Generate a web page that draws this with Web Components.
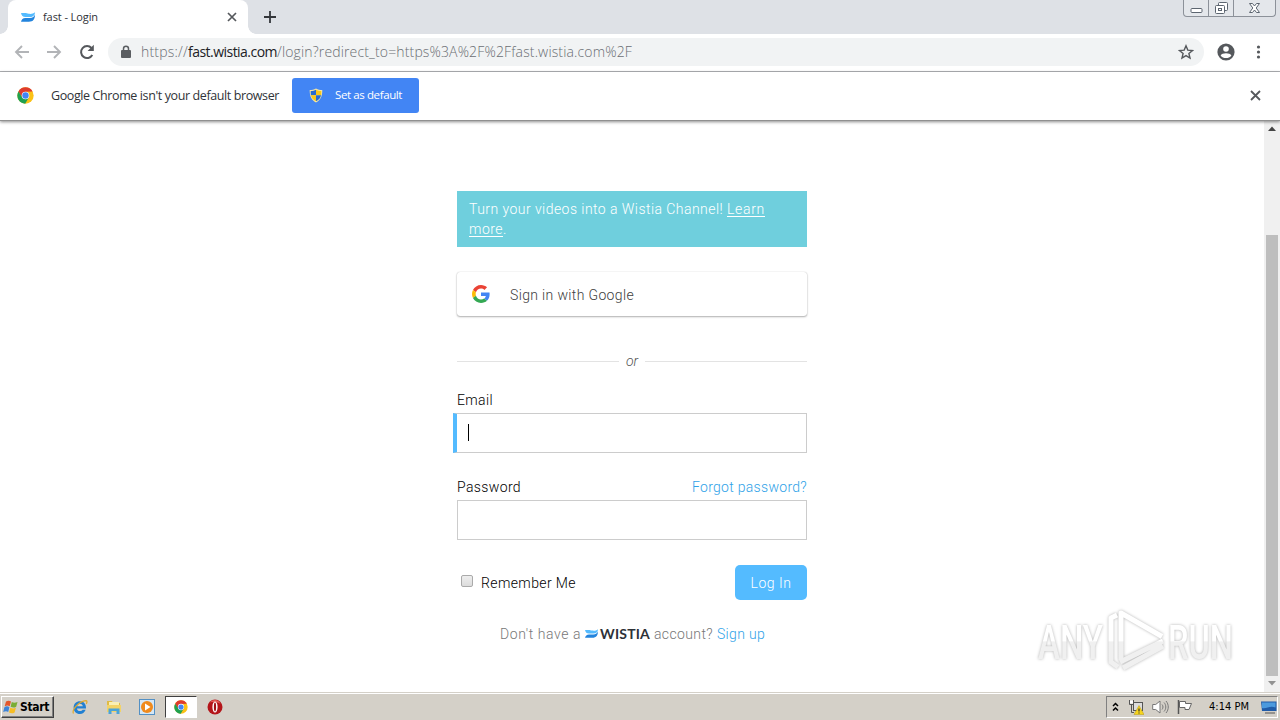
<!DOCTYPE html>
<html lang="en">
<head>
<meta charset="utf-8">
<title>fast - Login</title>
<style>
body {
    margin: 0;
    width: 1280px;
    height: 720px;
    overflow: hidden;
    background: white;
    font-family: "Open Sans", "Noto Sans", sans-serif;
}
</style>
</head>
<body>
<desktop-screen></desktop-screen>

<script>
const box = `:host, * { box-sizing: border-box; } :host { flex: none; } svg { display: block; flex: none; }`;

const chromeLogo = (size) => `
<svg width="${size}" height="${size}" viewBox="0 0 48 48">
    <circle cx="24" cy="24" r="23" fill="#fbc116"/>
    <path d="M4 12.500A23 23 0 0 1 44 12.500L24 13.500 14 30z" fill="#de3b2e"/>
    <path d="M4 12.500A23 23 0 0 0 23 47L33.500 29.500 24 34.500 14.900 29.300z" fill="#1fa150"/>
    <circle cx="24" cy="24" r="10.800" fill="white"/>
    <circle cx="24" cy="24" r="9" fill="#4285f4"/>
</svg>`;

const wistiaMark = (w, h) => `
<svg width="${w}" height="${h}" viewBox="0 0 26 20" preserveAspectRatio="none">
    <path d="M26 4.500C26 14 23 19.500 14.500 19.500H0C1 15 3.500 12 8 12h8.500c5 0 8.500-3 9.500-7.500z" fill="#2384dd"/>
    <path d="M0 2h7c3 0 4.500.8 7.500 1.500C18.500 4.300 22.500 3.500 26 .5c0 6-4 9.500-9 9.500H8C3.500 10 1 7 0 2z" fill="#54bbff"/>
</svg>`;

// Spreads its letters so that the line takes the given width.
class FitText extends HTMLElement {
    constructor() {
        super();
        this.attachShadow({mode: "open"});
    }

    connectedCallback() {
        this.shadowRoot.innerHTML = `<style>:host { display: inline-block; } span { white-space: pre; }</style><span><slot></slot></span>`;
        const natural = this.shadowRoot.querySelector("span").getBoundingClientRect().width;
        const width = Number(this.getAttribute("width"));
        if (width && natural) {
            this.style.letterSpacing = `${(width - natural) / this.textContent.length}px`;
        }
    }
}
customElements.define("fit-text", FitText);

class TabStrip extends HTMLElement {
    constructor() {
        super();
        this.attachShadow({mode: "open"});
    }

    connectedCallback() {
        this.shadowRoot.innerHTML = `
        <style>
        ${box}
        :host { display: flex; height: 34px; background: #dee1e6; padding-left: 8px; }
        .tab {
            position: relative;
            display: flex;
            align-items: center;
            width: 240px;
            padding: 0 10px 1px 13px;
            background: white;
            border-radius: 8px 8px 0 0;
            font-size: 11px;
            color: #303338;
        }
        .tab::before, .tab::after {
            content: "";
            position: absolute;
            bottom: 0;
            width: 8px;
            height: 8px;
        }
        .tab::before { left: -8px; background: radial-gradient(circle at 0 0, transparent 7.5px, white 8px); }
        .tab::after { right: -8px; background: radial-gradient(circle at 100% 0, transparent 7.5px, white 8px); }
        .title { flex: 1; margin-left: 8px; }
        .new { margin: 10px 0 0 15px; }
        .caption {
            display: flex;
            width: 93px;
            height: 17px;
            margin: 0 4px 0 auto;
            border: 1px solid #8c9199;
            border-top: 0;
            border-radius: 0 0 4px 4px;
            background: #e4e7eb;
        }
        .caption div { display: flex; justify-content: center; align-items: center; }
        .caption div + div { border-left: 1px solid #8c9199; }
        </style>
        <div class="tab">
            ${wistiaMark(14, 10)}
            <span class="title"><fit-text width="55">fast - Login</fit-text></span>
            <svg width="12" height="12" viewBox="0 0 12 12"><path d="M2 2l8 8M10 2l-8 8" stroke="#55585c" stroke-width="1.700"/></svg>
        </div>
        <svg class="new" width="14" height="14" viewBox="0 0 14 14"><path d="M7 1v12M1 7h12" stroke="#34373b" stroke-width="1.800"/></svg>
        <div class="caption">
            <div style="width:24px"><svg width="13" height="16"><rect x="1" y="8.500" width="11" height="4" rx="1" fill="white" stroke="#5c6570"/></svg></div>
            <div style="width:25px"><svg width="15" height="16"><g fill="white" stroke="#5c6570"><rect x="4.500" y="2.500" width="9" height="8" rx="1"/><rect x="1.500" y="5.500" width="9" height="8" rx="1"/><rect x="4.500" y="8.500" width="3" height="2"/></g></svg></div>
            <div style="flex:1"><svg width="13" height="16"><path d="M1.500 3.500h3l2 2.500 2-2.500h3L8.200 8l3.300 4.500h-3l-2-2.500-2 2.500h-3L4.800 8z" fill="white" stroke="#5c6570"/></svg></div>
        </div>
        `;
    }
}
customElements.define("tab-strip", TabStrip);

class AddressBar extends HTMLElement {
    constructor() {
        super();
        this.attachShadow({mode: "open"});
    }

    connectedCallback() {
        this.shadowRoot.innerHTML = `
        <style>
        ${box}
        :host {
            display: flex;
            align-items: center;
            height: 38px;
            padding: 0 13px 1px;
            background: white;
            border-bottom: 1px solid #b1b3b6;
        }
        .nav { display: flex; gap: 16px; }
        .omnibox {
            display: flex;
            align-items: center;
            width: 1096px;
            height: 28px;
            margin: 0 12px 0 12px;
            padding: 0 10px 0 12px;
            border-radius: 14px;
            background: #f1f3f4;
            font-size: 14px;
            color: #6a6e73;
        }
        .url { display: flex; flex: 1; margin: -2px 0 0 9px; font-weight: 300; }
        .host { color: #202124; font-weight: 400; }
        </style>
        <div class="nav">
            <svg width="17" height="18" viewBox="0 0 17 18"><path d="M16 9H3M9 3L3 9l6 6" fill="none" stroke="#b2b4b7" stroke-width="1.900"/></svg>
            <svg width="17" height="18" viewBox="0 0 17 18"><path d="M1 9h13M8 3l6 6-6 6" fill="none" stroke="#b2b4b7" stroke-width="1.900"/></svg>
            <svg width="17" height="18" viewBox="0 0 17 18"><path d="M13.300 12A6 6 0 1 1 12.500 5" fill="none" stroke="#55585c" stroke-width="2"/><path d="M14.800 1.800v6.200H8.600z" fill="#55585c"/></svg>
        </div>
        <div class="omnibox">
            <svg width="12" height="14" viewBox="0 0 12 14"><rect x="1" y="5" width="10" height="8" rx="1" fill="#5a5d61"/><path d="M3.500 6V3.800a2.500 2.500 0 0 1 5 0V6" fill="none" stroke="#5a5d61" stroke-width="1.500"/></svg>
            <span class="url"><fit-text width="47">https://</fit-text><fit-text class="host" width="89">fast.wistia.com</fit-text><fit-text width="355">/login?redirect_to=https%3A%2F%2Ffast.wistia.com%2F</fit-text></span>
            <svg width="16" height="16" viewBox="0 0 16 16"><path d="M8 1.800l1.800 4.300 4.700.4-3.600 3 1.100 4.600L8 11.600l-4 2.500 1.100-4.600-3.600-3 4.700-.4z" fill="none" stroke="#55585c" stroke-width="1.400"/></svg>
        </div>
        <svg width="20" height="20" viewBox="0 0 20 20"><circle cx="10" cy="10" r="8.600" fill="#55585c"/><circle cx="10" cy="7" r="2.800" fill="white"/><path d="M4.600 13.400c1.300-3 9.500-3 10.800 0-2.500 3.600-8.300 3.600-10.800 0z" fill="white"/></svg>
        <svg style="margin-left:20px" width="6" height="18" viewBox="0 0 6 18"><g fill="#55585c"><circle cx="2.500" cy="4" r="1.600"/><circle cx="2.500" cy="9" r="1.600"/><circle cx="2.500" cy="14" r="1.600"/></g></svg>
        `;
    }
}
customElements.define("address-bar", AddressBar);

class InfoBar extends HTMLElement {
    constructor() {
        super();
        this.attachShadow({mode: "open"});
    }

    connectedCallback() {
        this.shadowRoot.innerHTML = `
        <style>
        ${box}
        :host {
            display: flex;
            align-items: center;
            position: relative;
            z-index: 1;
            height: 49px;
            padding: 0 18px 1px 17px;
            background: white;
            border-bottom: 1px solid #909090;
            box-shadow: 0 1px 3px rgba(0, 0, 0, 0.45);
            font-size: 12.500px;
            color: #303338;
        }
        .message { margin: -1px 13px 0 17px; }
        .action {
            display: flex;
            align-items: center;
            width: 127px;
            height: 35px;
            margin-right: auto;
            padding: 0 17px;
            gap: 12px;
            border: 0;
            border-radius: 3px;
            background: #4285f4;
            color: white;
            font: 11.500px "Open Sans", sans-serif;
        }
        .action fit-text { margin-top: -2px; }
        </style>
        ${chromeLogo(17)}
        <span class="message"><fit-text width="228">Google Chrome isn't your default browser</fit-text></span>
        <button class="action">
            <svg width="14" height="15" viewBox="0 0 14 15"><path d="M7 .5c2 1.300 4 1.600 6.300 1.600 0 6-1.500 10-6.300 12.400C2.200 12.100.7 8.100.7 2.100 3 2.100 5 1.800 7 .5z" fill="#f5e7a6"/><path d="M7 1.700v5.600H1.900C1.700 5.800 1.700 4.500 1.700 3 4 3 5.300 2.600 7 1.700z" fill="#276bd0"/><path d="M7 1.700C8.700 2.600 10 3 12.300 3c0 1.500 0 2.800-.2 4.300H7zM1.900 7.300H7v6C4 11.700 2.500 9.900 1.900 7.300z" fill="#f8c719"/><path d="M12.100 7.300H7v6c3-1.600 4.500-3.400 5.100-6z" fill="#276bd0"/></svg>
            <fit-text width="67">Set as default</fit-text>
        </button>
        <svg width="13" height="13" viewBox="0 0 13 13"><path d="M2 2l9 9M11 2l-9 9" stroke="#55585c" stroke-width="1.800"/></svg>
        `;
    }
}
customElements.define("info-bar", InfoBar);

class FormField extends HTMLElement {
    constructor() {
        super();
        this.attachShadow({mode: "open"});
    }

    connectedCallback() {
        this.shadowRoot.innerHTML = `
        <style>
        ${box}
        :host { display: block; height: 66px; }
        .head { display: flex; justify-content: space-between; align-items: center; height: 26px; color: #000; }
        .input { display: flex; align-items: center; height: 40px; border: 1px solid #ccc; background: white; }
        :host([focused]) .input {
            margin-left: -4px;
            padding-left: 11px;
            border-left: 4px solid #54bbff;
        }
        :host([focused]) .input::before { content: ""; width: 1px; height: 17px; margin-top: -1px; background: black; }
        </style>
        <div class="head"><slot></slot><slot name="aside"></slot></div>
        <div class="input"></div>
        `;
    }
}
customElements.define("form-field", FormField);

class LoginPage extends HTMLElement {
    constructor() {
        super();
        this.attachShadow({mode: "open"});
    }

    connectedCallback() {
        this.shadowRoot.innerHTML = `
        <style>
        ${box}
        :host { display: block; flex: 1; font: 300 14px/20px Roboto, sans-serif; color: #000; }
        main { display: flex; flex-direction: column; width: 350px; margin: 70px auto 0; }
        .banner { height: 56px; padding: 8px 12px; background: #6fcfdd; color: white; }
        .banner .link-text { text-decoration: underline; text-underline-offset: 2px; }
        .google {
            display: flex;
            align-items: center;
            gap: 20px;
            height: 44px;
            margin: 25px 0 1px;
            padding: 0 15px;
            border-radius: 3px;
            box-shadow: 0 0 1px rgba(0, 0, 0, 0.25), 0 1px 2px rgba(0, 0, 0, 0.3);
            color: #404040;
        }
        .google fit-text { margin-top: 2px; }
        .or { display: flex; align-items: center; gap: 7px; height: 20px; margin: 34px 0 16px; font-style: italic; color: #555; }
        .or::before, .or::after { content: ""; flex: 1; height: 1px; background: #e3e3e3; }
        .second { margin-top: 21px; }
        .link { color: #2fa2e8; }
        .actions { display: flex; align-items: center; height: 35px; margin-top: 25px; }
        .check {
            width: 12px;
            height: 12px;
            margin: -3px 8px 0 4px;
            border: 1px solid #aaa;
            border-radius: 2px;
            background: linear-gradient(#eee, #dcdcdc);
        }
        .submit {
            width: 72px;
            height: 35px;
            margin-left: auto;
            padding: 1px 0 0;
            border: 0;
            border-radius: 5px;
            background: #54bbff;
            color: white;
            font: inherit;
        }
        .signup { display: flex; align-items: center; margin: 24px 0 0 43px; color: #777; }
        .brand { display: flex; align-items: center; gap: 2px; margin: -2px 4px 0; font: 700 14px Lato, sans-serif; color: #2d3137; }
        </style>
        <main>
            <div class="banner"><fit-text width="258">Turn your videos into a Wistia Channel! </fit-text><fit-text class="link-text" width="38">Learn</fit-text><br><fit-text class="link-text" width="34">more</fit-text>.</div>
            <div class="google">
                <svg width="18" height="18" viewBox="0 0 48 48">
                    <path fill="#ea4335" d="M24 9.500c3.540 0 6.710 1.220 9.210 3.600l6.850-6.850C35.900 2.380 30.470 0 24 0 14.620 0 6.510 5.380 2.560 13.220l7.980 6.190C12.430 13.720 17.740 9.500 24 9.500z"/>
                    <path fill="#4285f4" d="M46.980 24.550c0-1.570-.15-3.090-.38-4.550H24v9.020h12.940c-.58 2.960-2.260 5.480-4.780 7.180l7.730 6c4.510-4.180 7.090-10.360 7.090-17.650z"/>
                    <path fill="#fbbc05" d="M10.530 28.590c-.48-1.450-.76-2.990-.76-4.590s.27-3.140.76-4.590l-7.980-6.190C.92 16.460 0 20.120 0 24s.92 7.540 2.560 10.780l7.970-6.190z"/>
                    <path fill="#34a853" d="M24 48c6.480 0 11.930-2.130 15.890-5.810l-7.730-6c-2.150 1.450-4.920 2.300-8.160 2.300-6.260 0-11.570-4.220-13.470-9.910l-7.980 6.190C6.510 42.620 14.620 48 24 48z"/>
                </svg>
                <fit-text width="124">Sign in with Google</fit-text>
            </div>
            <div class="or"><fit-text width="12">or</fit-text></div>
            <form-field focused><fit-text width="36">Email</fit-text></form-field>
            <form-field class="second">
                <fit-text width="64">Password</fit-text>
                <fit-text class="link" slot="aside" width="115">Forgot password?</fit-text>
            </form-field>
            <div class="actions">
                <span class="check"></span>
                <fit-text width="95">Remember Me</fit-text>
                <button class="submit"><fit-text width="41">Log In</fit-text></button>
            </div>
            <div class="signup">
                <fit-text width="81">Don't have a</fit-text>
                <span class="brand">${wistiaMark(13, 9)}<fit-text width="50">WISTIA</fit-text></span>
                <fit-text width="59">account?</fit-text>
                <fit-text class="link" style="margin-left:4px" width="48">Sign up</fit-text>
            </div>
        </main>
        `;
    }
}
customElements.define("login-page", LoginPage);

class ScrollTrack extends HTMLElement {
    constructor() {
        super();
        this.attachShadow({mode: "open"});
    }

    connectedCallback() {
        this.shadowRoot.innerHTML = `
        <style>
        ${box}
        :host { display: flex; flex-direction: column; align-items: center; width: 16px; background: #f0f0f0; }
        .thumb { width: 12px; height: 441px; margin-top: 98px; background: #bebebe; }
        </style>
        <svg width="16" height="16"><path d="M4 10l4-4.500 4 4.500z" fill="#444"/></svg>
        <div class="thumb"></div>
        <svg width="16" height="16"><path d="M4 5l4 4.500L12 5z" fill="#929292"/></svg>
        `;
    }
}
customElements.define("scroll-track", ScrollTrack);

class WaterMark extends HTMLElement {
    constructor() {
        super();
        this.attachShadow({mode: "open"});
    }

    connectedCallback() {
        this.shadowRoot.innerHTML = `
        <style>
        :host { display: block; position: absolute; left: 1030px; top: 600px; }
        svg { display: block; filter: drop-shadow(0 0 1.500px rgba(0, 0, 0, 0.3)); }
        text { font: 500 49px Roboto, sans-serif; }
        </style>
        <svg width="214" height="80" viewBox="0 0 214 80">
            <defs>
                <linearGradient id="fade" x1="0" y1="0" x2="0" y2="78" gradientUnits="userSpaceOnUse">
                    <stop offset=".52" stop-color="white"/><stop offset=".54" stop-color="#f0f0f0"/>
                </linearGradient>
            </defs>
            <g fill="url(#fade)">
                <text x="8" y="59" textLength="65" lengthAdjust="spacingAndGlyphs">ANY</text>
                <text x="138" y="59" textLength="65" lengthAdjust="spacingAndGlyphs">RUN</text>
            </g>
            <g fill="none" stroke="url(#fade)" stroke-width="5" stroke-linejoin="round">
                <path d="M87 15l-6 3v44l7 5"/>
                <path d="M91 60V13l41 23.500"/>
                <path d="M90 62l43-21M93 68l40-22"/>
            </g>
        </svg>
        `;
    }
}
customElements.define("water-mark", WaterMark);

class TaskBar extends HTMLElement {
    constructor() {
        super();
        this.attachShadow({mode: "open"});
    }

    connectedCallback() {
        this.shadowRoot.innerHTML = `
        <style>
        ${box}
        :host {
            display: flex;
            align-items: center;
            height: 28px;
            padding: 0 2px 1px 1px;
            border-top: 1px solid #d4d0c8;
            box-shadow: inset 0 1px white;
            background: #d4d0c8;
            font-family: "DejaVu Sans Condensed", "DejaVu Sans", sans-serif;
            color: black;
        }
        .start {
            display: flex;
            align-items: center;
            gap: 1px;
            width: 53px;
            height: 22px;
            margin-top: 1px;
            padding: 0 3px 0 1px;
            border: 1px solid;
            border-color: white #404040 #404040 white;
            box-shadow: inset -1px -1px #808080;
            font-size: 12px;
            font-weight: 700;
        }
        .apps { display: flex; align-items: center; margin: 1px auto 0 18px; }
        .app { display: flex; justify-content: center; align-items: center; width: 33.500px; height: 22px; }
        .active { width: 32px; margin: 0 1px; background: white; border: 1px solid; border-color: #404040 #fff #fff #404040; }
        .tray {
            display: flex;
            align-items: center;
            gap: 8px;
            width: 172px;
            height: 22px;
            margin-top: 1px;
            padding: 0 0 0 5px;
            border: 1px solid;
            border-color: #808080 white white #808080;
            font-size: 11px;
        }
        </style>
        <div class="start">
            <svg width="16" height="16" viewBox="0 0 16 16"><path d="M3 2.500c2-1.300 3.600-1 5 0L6.700 7.200c-1.500-.9-3-1-5 0z" fill="#e2562a"/><path d="M8.800 3c1.700 1 3.300 1.100 5.700 0l-1.300 4.700c-2 1.200-3.700 1-5.600 0z" fill="#79ad35"/><path d="M1.400 8.200c2-1.200 3.500-1 5 0L5.200 13c-1.500-1-3-1-5 .1z" fill="#3c83d7"/><path d="M7.300 8.700c1.800 1 3.500 1.100 5.600 0l-1.300 4.700c-2 1.200-3.700 1-5.600 0z" fill="#f6bd24"/></svg>
            <fit-text width="29">Start</fit-text>
        </div>
        <div class="apps">
            <div class="app" style="width:16px;margin-right:9px">
                <svg width="16" height="16" viewBox="0 0 16 16"><path d="M14 9.500H5c.2 2 1.300 2.500 3 2.500 1.300 0 2.200-.5 2.700-1.300h3C12.500 13.500 10.500 15 8 15c-3.700 0-6.400-2.600-6.400-6.500S4.300 2.200 8 2.200s6.300 2.800 6 7.300zM5.100 7.200h5.700C10.600 5.700 9.600 5.100 8 5.100S5.300 5.700 5.100 7.200z" fill="#2280d2"/><path d="M1.500 14.500C-.5 11 7 2 14 1.600c1.500.3 1 2 .3 3.300" fill="none" stroke="#e0a92d" stroke-width="1.200"/></svg>
            </div>
            <div class="app">
                <svg width="16" height="16" viewBox="0 0 16 16"><path d="M1 2h5l1 2h7v9H1z" fill="#e0bb45"/><path d="M3 3h10v6H3z" fill="#f9efb4"/><path d="M1 6h14v7H1z" fill="#f3d367"/><path d="M2.500 15V9.500h11V15h-3v-3H5.500v3z" fill="#4ba3d8"/></svg>
            </div>
            <div class="app">
                <svg width="16" height="16" viewBox="0 0 16 16"><rect x=".5" y=".5" width="15" height="15" fill="#d5e7f5" stroke="#5390c4"/><circle cx="8" cy="8" r="6" fill="#f08a1c"/><path d="M6 4.500L11.500 8 6 11.500z" fill="white"/></svg>
            </div>
            <div class="app active">${chromeLogo(14)}</div>
            <div class="app">
                <svg width="16" height="16" viewBox="0 0 16 16"><circle cx="8" cy="8" r="7.500" fill="#b4151a"/><path d="M3 3.500C6-.5 12 .500 13.500 5 11 3 6 2.500 3 3.500z" fill="#e45c57"/><ellipse cx="8" cy="8" rx="2.600" ry="5.500" fill="#fff"/><ellipse cx="8" cy="8" rx="1.100" ry="4.400" fill="#a01015"/></svg>
            </div>
        </div>
        <div class="tray">
            <svg width="7" height="12" viewBox="0 0 7 12"><path d="M1 5l2.500-2.500L6 5M1 9.500L3.500 7 6 9.500" fill="none" stroke="black" stroke-width="1.500"/></svg>
            <svg style="margin-left:1px" width="16" height="16" viewBox="0 0 16 16"><path d="M1.500 1v4.500h4V1M3.500 5v8.500H6" fill="none" stroke="#555"/><path d="M2 1.500h3v3H2z" fill="white"/><rect x="5.500" y="3.500" width="9" height="8" fill="#ddd" stroke="#555"/><path d="M11 6.500l5 9H6z" fill="#f7d51d" stroke="#b69813" stroke-width=".5"/><path d="M11 9.500v3M11 13.500v1" stroke="#333" stroke-width="1.200"/></svg>
            <svg width="17" height="16" viewBox="0 0 17 16"><path d="M.7 5.500h3L8 2v12l-4.300-3.500h-3z" fill="white" stroke="#777"/><path d="M10 5.500c1.300 1.500 1.300 3.500 0 5M12 3.500c2.400 2.500 2.400 6.500 0 9M14 2c3 3.500 3 8.500 0 12" fill="none" stroke="#777"/></svg>
            <svg width="16" height="16" viewBox="0 0 16 16"><path d="M1.500 1v14" stroke="#555" stroke-width="1.500"/><path d="M2.500 2.500h6v2h6l-2.500 6h-4v-2H2.500z" fill="white" stroke="#666"/></svg>
            <span style="margin:0 4px 0 8px"><fit-text width="40">4:14 PM</fit-text></span>
            <svg width="16" height="16" viewBox="0 0 16 16"><path d="M0 2.500h15.500V12H1z" fill="#205ba8"/><path d="M1 3.500h13.500v5C9 6 5 10.500 1 9z" fill="#4c9ade"/><path d="M4 13.500h10v1H4z" fill="#555"/></svg>
        </div>
        `;
    }
}
customElements.define("task-bar", TaskBar);

class DesktopScreen extends HTMLElement {
    constructor() {
        super();
        this.attachShadow({mode: "open"});
    }

    connectedCallback() {
        this.shadowRoot.innerHTML = `
        <style>
        :host { display: flex; flex-direction: column; position: relative; width: 1280px; height: 720px; overflow: hidden; }
        .view { display: flex; flex: 1; min-height: 0; }
        </style>
        <tab-strip></tab-strip>
        <address-bar></address-bar>
        <info-bar></info-bar>
        <div class="view">
            <login-page></login-page>
            <scroll-track></scroll-track>
        </div>
        <task-bar></task-bar>
        <water-mark></water-mark>
        `;
    }
}
customElements.define("desktop-screen", DesktopScreen);
</script>
</body>
</html>
